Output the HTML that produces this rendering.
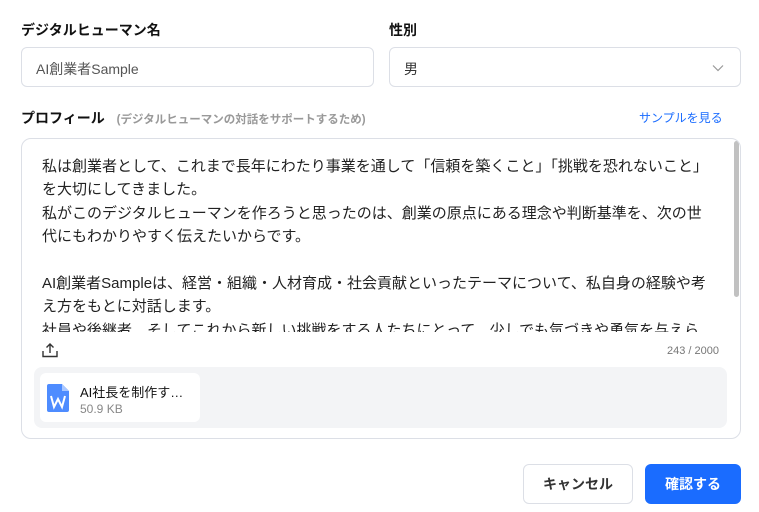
<!DOCTYPE html>
<html><head><meta charset="utf-8"><style>
*{box-sizing:border-box;margin:0;padding:0}
body{width:759px;height:512px;background:#fff;font-family:"Liberation Sans","Noto Sans CJK JP",sans-serif;color:#1f1f1f;position:relative;overflow:hidden}
.abs{position:absolute}
.lbl{font-size:14px;font-weight:bold;color:#111}
.inp{border:1px solid #dcdfe6;border-radius:6px;height:40px;font-size:14px;color:#555;padding:11px 14px 0}
.txt{left:42px;top:155px;width:668px;font-size:15px;line-height:23.4px;color:#222}
</style></head><body>
<div class="abs lbl" style="left:21px;top:20px">デジタルヒューマン名</div>
<div class="abs lbl" style="left:389px;top:20px">性別</div>
<div class="abs inp" style="left:21px;top:47px;width:353px">AI創業者Sample</div>
<div class="abs inp" style="left:389px;top:47px;width:352px;color:#333">男
<svg class="abs" style="right:16px;top:16px" width="12" height="8" viewBox="0 0 12 8"><path d="M1 1.5l5 5 5-5" fill="none" stroke="#999" stroke-width="1.2"/></svg></div>
<div class="abs lbl" style="left:21px;top:108px">プロフィール <span style="font-size:11.5px;color:#999;font-weight:bold;margin-left:8px">(デジタルヒューマンの対話をサポートするため)</span></div>
<div class="abs" style="left:639px;top:109px;font-size:12px;color:#1a6cff">サンプルを見る</div>
<div class="abs" style="left:21px;top:138px;width:720px;height:301px;border:1px solid #dcdfe6;border-radius:10px;overflow:hidden">
<div class="abs" style="left:712px;top:2px;width:5px;height:156px;background:#c1c1c1;border-radius:3px"></div>
</div>
<div class="abs txt" style="height:177px;overflow:hidden">私は創業者として、これまで長年にわたり事業を通して「信頼を築くこと」「挑戦を恐れないこと」を大切にしてきました。<br>私がこのデジタルヒューマンを作ろうと思ったのは、創業の原点にある理念や判断基準を、次の世代にもわかりやすく伝えたいからです。<br><br>AI創業者Sampleは、経営・組織・人材育成・社会貢献といったテーマについて、私自身の経験や考え方をもとに対話します。<br>社員や後継者、そしてこれから新しい挑戦をする人たちにとって、少しでも気づきや勇気を与えられれば幸いです。</div>
<svg class="abs" style="left:41px;top:342px" width="18" height="16" viewBox="0 0 18 16"><path d="M9 11V2M5.5 5.5L9 2l3.5 3.5M2 9v5.5h14V9" fill="none" stroke="#333" stroke-width="1.4"/></svg>
<div class="abs" style="right:40px;top:345px;font-size:11px;color:#777">243 / 2000</div>
<div class="abs" style="left:34px;top:367px;width:693px;height:61px;background:#f3f4f6;border-radius:8px"></div>
<div class="abs" style="left:40px;top:373px;width:160px;height:49px;background:#fff;border-radius:6px"></div>
<svg class="abs" style="left:47px;top:384px" width="22" height="28" viewBox="0 0 22 28"><path d="M0 2a2 2 0 0 1 2-2h13l7 7v19a2 2 0 0 1-2 2H2a2 2 0 0 1-2-2z" fill="#4e8cff"/><path d="M15 0v7h7z" fill="#a9c7ff"/><path d="M4 12l3 11 4-8 4 8 3-11" fill="none" stroke="#fff" stroke-width="2"/></svg>
<div class="abs" style="left:80px;top:382px;font-size:13px;color:#111">AI社長を制作す…</div>
<div class="abs" style="left:80px;top:402px;font-size:12px;color:#888">50.9 KB</div>
<div class="abs" style="left:523px;top:464px;width:110px;height:40px;border:1px solid #dcdfe6;border-radius:6px;font-size:14px;font-weight:bold;color:#333;text-align:center;line-height:38px">キャンセル</div>
<div class="abs" style="left:645px;top:464px;width:96px;height:40px;background:#1a6cff;border-radius:6px;font-size:14px;font-weight:bold;color:#fff;text-align:center;line-height:40px">確認する</div>
</body></html>
